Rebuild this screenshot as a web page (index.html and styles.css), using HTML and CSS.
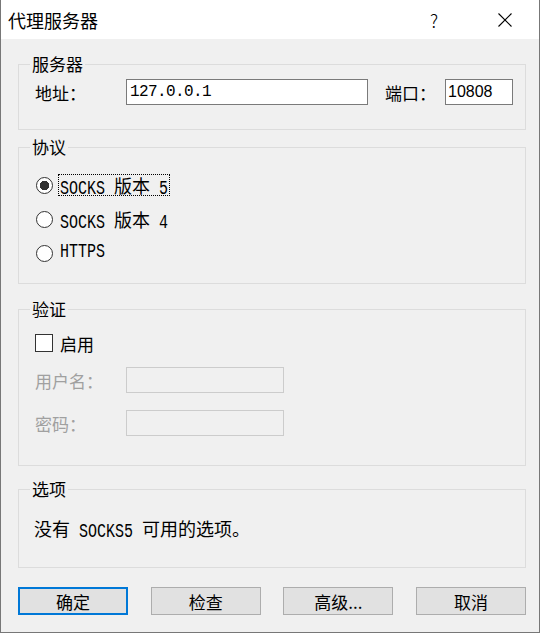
FILE: index.html
```html
<!DOCTYPE html>
<html lang="zh-CN">
<head>
    <meta charset="UTF-8">
    <title>代理服务器</title>
    <link rel="stylesheet" href="styles.css">
</head>
<body>
    <div class="window">
        <div class="titlebar">
            <span class="title">代理服务器</span>
            <span class="help">?</span>
            <svg class="close" width="14" height="14" viewBox="0 0 14 14">
                <path d="M0.5 0.5 L13.5 13.5 M13.5 0.5 L0.5 13.5" stroke="#000" stroke-width="1.1" fill="none"/>
            </svg>
        </div>

        <div class="content">
            <fieldset class="group group-server">
                <legend>服务器</legend>
                <div class="row">
                    <label class="lbl lbl-addr">地址：</label>
                    <input class="field field-addr" type="text" value="127.0.0.1">
                    <label class="lbl lbl-port">端口：</label>
                    <input class="field field-port" type="text" value="10808">
                </div>
            </fieldset>

            <fieldset class="group group-proto">
                <legend>协议</legend>
                <div class="options">
                    <label class="opt">
                        <input type="radio" name="proto" checked>
                        <span class="sim focus"><span class="lat">SOCKS</span> <span class="w">版本</span> <span class="lat">5</span></span>
                    </label>
                    <label class="opt">
                        <input type="radio" name="proto">
                        <span class="sim"><span class="lat">SOCKS</span> <span class="w">版本</span> <span class="lat">4</span></span>
                    </label>
                    <label class="opt">
                        <input type="radio" name="proto">
                        <span class="sim"><span class="lat">HTTPS</span></span>
                    </label>
                </div>
            </fieldset>

            <fieldset class="group group-auth">
                <legend>验证</legend>
                <label class="check">
                    <input type="checkbox">
                    <span>启用</span>
                </label>
                <div class="row auth-row">
                    <label class="lbl lbl-auth disabled">用户名：</label>
                    <input class="field field-auth" type="text" disabled>
                </div>
                <div class="row auth-row pass-row">
                    <label class="lbl lbl-auth disabled">密码：</label>
                    <input class="field field-auth" type="password" disabled>
                </div>
            </fieldset>

            <fieldset class="group group-extra">
                <legend>选项</legend>
                <p class="sim note"><span class="w">没有</span> <span class="lat">SOCKS5</span> <span class="w">可用的选项。</span></p>
            </fieldset>

            <div class="buttons">
                <button class="btn btn-default">确定</button>
                <button class="btn">检查</button>
                <button class="btn">高级...</button>
                <button class="btn">取消</button>
            </div>
        </div>
    </div>
</body>
</html>
```

FILE: styles.css
```css
html, body {
    margin: 0;
    background: #fff;
}
.window {
    width: 538px;
    height: 632px;
    border: 1px solid #777;
    border-top: none;
    background: #f0f0f0;
    font-family: "Noto Sans CJK SC", sans-serif;
    font-size: 17px;
    color: #000;
}
.titlebar {
    height: 39px;
    background: #fff;
    display: flex;
    align-items: center;
    padding-left: 7px;
}
.title {
    flex: 1;
    font-size: 18px;
}
.help {
    font-size: 18px;
    font-weight: 300;
    margin-right: 60px;
}
.close {
    margin-right: 27px;
}
.content {
    padding: 15px 13px 0 17px;
}
.group {
    margin: 0;
    min-width: 0;
    border: 1px solid #dcdcdc;
    padding: 0 0 0 16px;
}
.group legend {
    padding: 0 2px;
    margin-left: -5px;
    line-height: 20px;
}
.row {
    display: flex;
    align-items: center;
    height: 26px;
}
.lbl {
    flex: none;
}
.lbl-addr {
    width: 91px;
}
.lbl-port {
    width: 60px;
    margin-left: 17px;
}
.lbl-auth {
    width: 91px;
}
.disabled {
    color: #a0a0a0;
}
.field {
    box-sizing: border-box;
    height: 26px;
    border: 1px solid #7a7a7a;
    background: #fff;
    padding: 0 3px;
    font-family: "Liberation Mono", monospace;
    font-size: 16px;
    color: #000;
    outline: none;
}
.field-addr {
    width: 242px;
    letter-spacing: -0.6px;
}
.field-port {
    width: 68px;
    padding: 0 2px;
    font-family: "Liberation Sans", sans-serif;
}
.field-auth {
    width: 158px;
    border-color: #cccccc;
    background: #f0f0f0;
}
.sim {
    font-family: "Liberation Mono", "Noto Sans CJK SC", monospace;
    font-size: 15px;
}
.sim .w {
    font-family: "Noto Sans CJK SC", sans-serif;
    font-size: 18px;
}
.sim .lat {
    display: inline-block;
    transform: scaleY(1.3);
}

/* protocol */
.group-server {
    padding-top: 5px;
    padding-bottom: 24px;
}
.group-proto {
    margin-top: 7px;
    padding-top: 17px;
    padding-bottom: 19px;
}
.options {
    display: flex;
    flex-direction: column;
    gap: 12px;
}
.opt {
    display: flex;
    align-items: center;
    height: 22px;
}
.opt input {
    appearance: none;
    margin: 0 5px 0 1px;
    width: 17px;
    height: 17px;
    border: 1px solid #333;
    border-radius: 50%;
    background: #fff;
    box-sizing: border-box;
}
.opt input:checked {
    background: radial-gradient(circle, #333 0 4.5px, #fff 5px);
}
.opt .sim {
    box-sizing: border-box;
    height: 22px;
    line-height: 20px;
    padding: 0 1px;
    border: 1px solid transparent;
}
.opt .focus {
    border: 1px dotted #000;
}

/* auth */
.group-auth {
    margin-top: 15px;
    padding-top: 13px;
    padding-bottom: 29px;
}
.check {
    display: flex;
    align-items: center;
    height: 22px;
}
.check input {
    appearance: none;
    margin: 0 7px 0 0;
    width: 18px;
    height: 18px;
    border: 1px solid #333;
    background: #fff;
}
.auth-row {
    margin-top: 13px;
}
.pass-row {
    margin-top: 17px;
}

/* options */
.group-extra {
    margin-top: 13px;
    padding-top: 18px;
    padding-bottom: 28px;
}
.note {
    margin: 0 0 0 -1px;
    line-height: 22px;
    height: 22px;
}

.buttons {
    display: flex;
    justify-content: space-between;
    margin-top: 19px;
}
.btn {
    width: 110px;
    height: 28px;
    padding: 0;
    background: #e1e1e1;
    border: 1px solid #adadad;
    font-family: "Noto Sans CJK SC", sans-serif;
    font-size: 17px;
    color: #000;
}
.btn-default {
    border: 2px solid #0078d7;
}
```
